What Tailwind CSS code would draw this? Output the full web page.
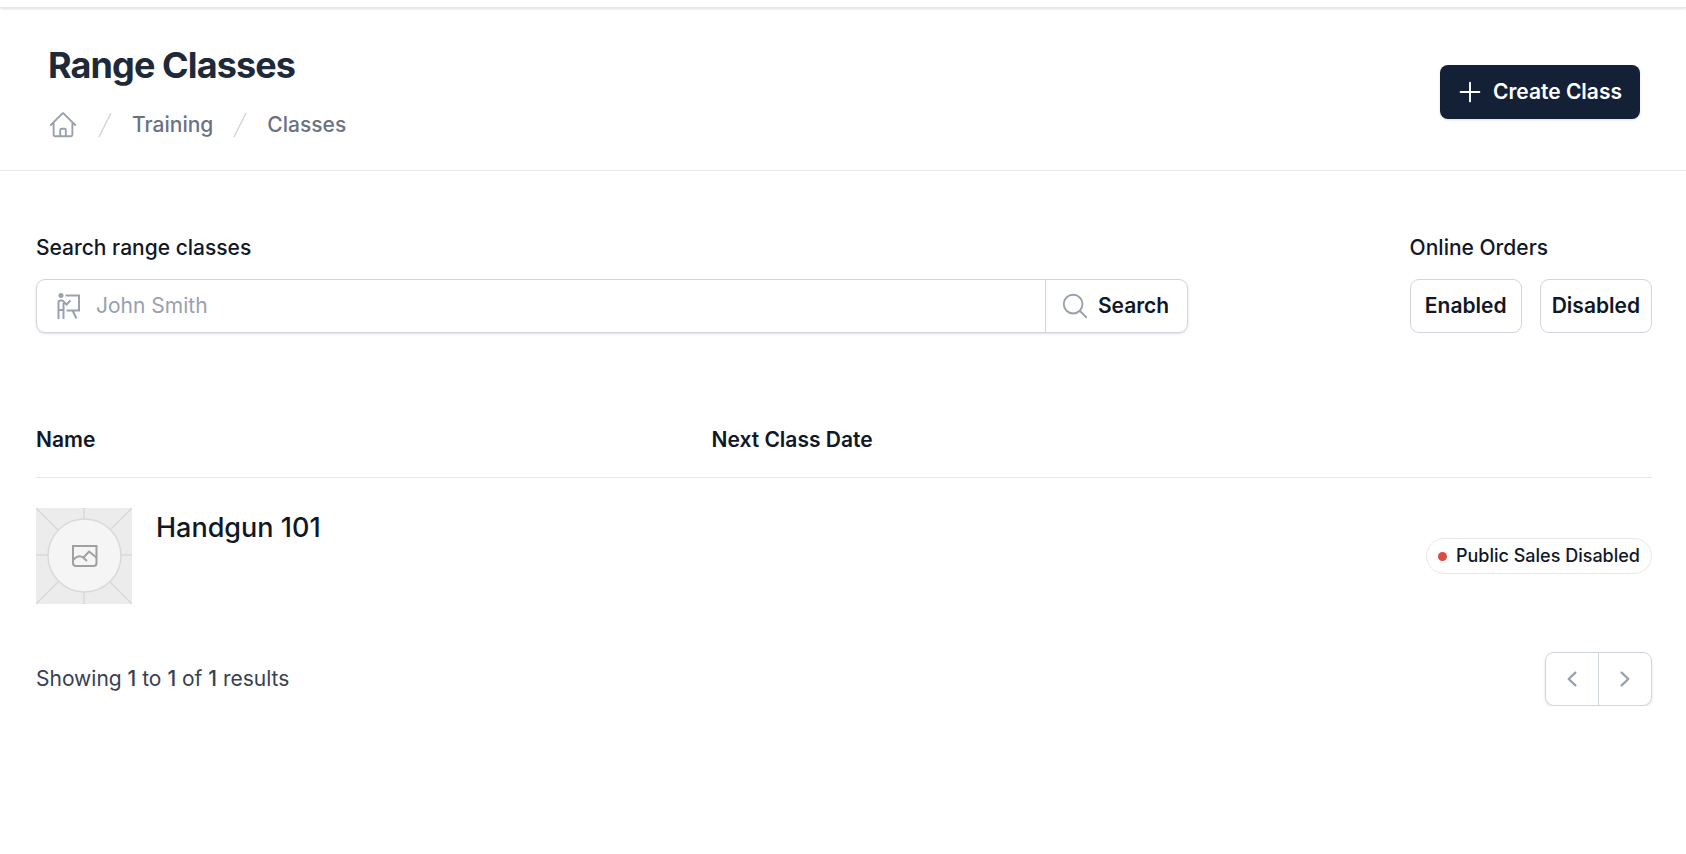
<!DOCTYPE html>
<html lang="en">
<head>
    <meta charset="UTF-8">
    <meta name="viewport" content="width=device-width, initial-scale=1.0">
    <title>Range Classes</title>
    <script src="https://cdn.jsdelivr.net/npm/@tailwindcss/browser@4"></script>
</head>
<body class="bg-white font-['Inter',sans-serif] text-[21px] leading-[30px] text-gray-900">

    <!-- Bottom edge of the top bar -->
    <div class="h-2 border-b border-gray-200 shadow-sm"></div>

    <!-- Page header -->
    <header class="flex items-center justify-between border-b border-gray-200 pt-9 pb-[30px] pl-12 pr-[46px]">
        <div>
            <h1 class="text-[36px] leading-[42px] font-bold tracking-tight text-gray-800">Range Classes</h1>
            <nav aria-label="Breadcrumb" class="mt-6">
                <ol class="flex items-center gap-3 font-medium text-gray-500">
                    <li>
                        <a href="#" aria-label="Home" class="block text-gray-400">
                            <svg class="size-[30px]" viewBox="0 0 24 24" fill="none" stroke="currentColor" stroke-width="1.5" stroke-linecap="round" stroke-linejoin="round">
                                <path d="M2.25 12l8.954-8.955c.44-.439 1.152-.439 1.591 0L21.75 12M4.5 9.75v10.125c0 .621.504 1.125 1.125 1.125H9.75v-4.875c0-.621.504-1.125 1.125-1.125h2.25c.621 0 1.125.504 1.125 1.125V21h4.125c.621 0 1.125-.504 1.125-1.125V9.75M8.25 21h8.25"/>
                            </svg>
                        </a>
                    </li>
                    <li class="flex items-center gap-3">
                        <svg class="size-[30px] text-gray-300" viewBox="0 0 20 20" fill="currentColor" aria-hidden="true">
                            <path d="M5.555 17.776l8-16 .894.448-8 16-.894-.448z"/>
                        </svg>
                        <a href="#">Training</a>
                    </li>
                    <li class="flex items-center gap-3">
                        <svg class="size-[30px] text-gray-300" viewBox="0 0 20 20" fill="currentColor" aria-hidden="true">
                            <path d="M5.555 17.776l8-16 .894.448-8 16-.894-.448z"/>
                        </svg>
                        <a href="#">Classes</a>
                    </li>
                </ol>
            </nav>
        </div>
        <button type="button" class="flex h-[54px] items-center gap-2 rounded-lg bg-[#132035] pl-[15px] pr-[18px] font-semibold text-white shadow-sm">
            <svg class="size-[30px]" viewBox="0 0 24 24" fill="none" stroke="currentColor" stroke-width="1.5" stroke-linecap="round" aria-hidden="true">
                <path d="M12 4.5v15m7.5-7.5h-15"/>
            </svg>
            Create Class
        </button>
    </header>

    <main class="pt-[62px] pl-9 pr-[34px]">
        <!-- Filters -->
        <div class="flex items-start justify-between">
            <form class="w-[71.3%]" onsubmit="return false">
                <label for="search" class="block font-medium">Search range classes</label>
                <div class="mt-4 flex h-[54px] rounded-[9px] border border-gray-300 shadow-sm">
                    <div class="flex flex-1 items-center gap-3 pl-[17px]">
                        <svg class="size-[30px] text-gray-400" viewBox="0 0 30 30" fill="none" stroke="currentColor" stroke-width="2" aria-hidden="true">
                            <circle cx="7" cy="4.5" r="2.5" fill="currentColor" stroke="none"/>
                            <path d="M11.500 4.500H25v15H12.500M18.500 19.500l4 8"/>
                            <path d="M4.500 28V11.500q0-2 2-2H8q1 0 1.500 1l3 3 4-4M4.500 19h5M9.500 28V12"/>
                        </svg>
                        <input id="search" type="text" placeholder="John Smith" class="min-w-0 flex-1 outline-none placeholder:text-gray-400">
                    </div>
                    <button type="submit" class="flex items-center gap-2 border-l border-gray-300 pl-[14px] pr-[18px] font-semibold">
                        <svg class="size-[30px] text-gray-400" viewBox="0 0 24 24" fill="none" stroke="currentColor" stroke-width="1.5" stroke-linecap="round" stroke-linejoin="round" aria-hidden="true">
                            <path d="M21 21l-5.197-5.197m0 0A7.500 7.500 0 105.196 5.196a7.500 7.500 0 0010.607 10.607z"/>
                        </svg>
                        Search
                    </button>
                </div>
            </form>
            <fieldset class="w-[15%]">
                <legend class="font-medium">Online Orders</legend>
                <div class="mt-4 grid grid-cols-2 gap-[18px]">
                    <button type="button" class="h-[54px] rounded-[9px] border border-gray-300 font-semibold">Enabled</button>
                    <button type="button" class="h-[54px] rounded-[9px] border border-gray-300 font-semibold">Disabled</button>
                </div>
            </fieldset>
        </div>

        <!-- Classes -->
        <table class="mt-[92px] w-full text-left">
            <thead>
                <tr class="border-b border-gray-200">
                    <th scope="col" class="w-[41.8%] pb-[22px] font-semibold">Name</th>
                    <th scope="col" class="pb-[22px] font-semibold">Next Class Date</th>
                    <th scope="col" class="pb-[22px]"><span class="sr-only">Status</span></th>
                </tr>
            </thead>
            <tbody>
                <tr>
                    <td class="py-[30px]">
                        <div class="flex gap-6">
                            <svg class="size-24" viewBox="0 0 96 96" fill="none" stroke="#d9d9d9" stroke-width="1.5" aria-hidden="true">
                                <path d="M0 0h96v96H0z" fill="#ececec" stroke="none"/>
                                <path d="M0 0l96 96M96 0L0 96M48 0v96M0 47h96"/>
                                <circle cx="48.500" cy="47.500" r="36.500" fill="#f5f5f5"/>
                                <g stroke="#a0a0a0" stroke-width="2">
                                    <path d="M37 38h23.500v17q0 3-3 3H40q-3 0-3-3z"/>
                                    <path d="M37 52q6-6 10-2.500l4 3.500M47.500 49.500l5.500-6 7.500 6"/>
                                </g>
                            </svg>
                            <a href="#" class="self-start text-[27px] leading-10 font-medium">Handgun 101</a>
                        </div>
                    </td>
                    <td></td>
                    <td class="text-right">
                        <span class="inline-flex h-9 items-center gap-[9px] rounded-full border border-gray-200 px-[11px] align-middle text-[18px] font-medium">
                            <span class="size-[9px] rounded-full bg-[#dc4a41]"></span>
                            Public Sales Disabled
                        </span>
                    </td>
                </tr>
            </tbody>
        </table>

        <!-- Pagination -->
        <div class="mt-[18px] flex items-center justify-between">
            <p class="text-gray-700">Showing <span class="font-medium">1</span> to <span class="font-medium">1</span> of <span class="font-medium">1</span> results</p>
            <nav aria-label="Pagination" class="flex h-[54px] divide-x divide-gray-300 rounded-[9px] border border-gray-300 text-gray-400 shadow-sm">
                <button type="button" aria-label="Previous" class="px-[11px]">
                    <svg class="size-[30px]" viewBox="0 0 20 20" fill="currentColor">
                        <path fill-rule="evenodd" d="M12.790 5.230a.75.75 0 01-.02 1.060L8.832 10l3.938 3.710a.75.75 0 11-1.040 1.080l-4.500-4.250a.75.75 0 010-1.080l4.500-4.250a.75.75 0 011.060.02z" clip-rule="evenodd"/>
                    </svg>
                </button>
                <button type="button" aria-label="Next" class="px-[11px]">
                    <svg class="size-[30px]" viewBox="0 0 20 20" fill="currentColor">
                        <path fill-rule="evenodd" d="M7.210 14.770a.75.75 0 01.02-1.060L11.168 10 7.230 6.290a.75.75 0 111.040-1.080l4.500 4.250a.75.75 0 010 1.080l-4.500 4.250a.75.75 0 01-1.060-.02z" clip-rule="evenodd"/>
                    </svg>
                </button>
            </nav>
        </div>
    </main>

</body>
</html>
